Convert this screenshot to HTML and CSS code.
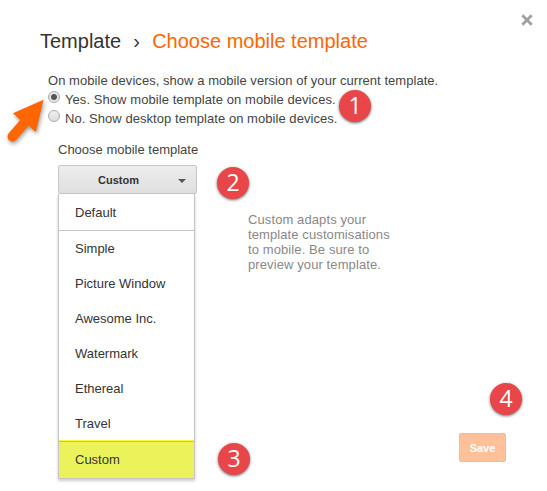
FILE: index.html
```html
<!DOCTYPE html>
<html lang="en">
<head>
<meta charset="utf-8">
<title>Choose mobile template</title>
<link rel="stylesheet" href="styles.css">
</head>
<body>
<main class="dialog">
  <button class="close" aria-label="Close"><svg width="12" height="12" viewBox="0 0 12 12"><path d="M1.300 1.300 10.700 10.700M10.700 1.300 1.300 10.700"/></svg></button>
  <h1 class="title"><span>Template</span><span class="sep">›</span><span class="current">Choose mobile template</span></h1>
  <section class="options">
    <p class="lead">On mobile devices, show a mobile version of your current template.</p>
    <div class="option"><span class="radio checked"></span><span class="yes">Yes. Show mobile template on mobile devices.</span></div>
    <div class="option"><span class="radio"></span><span class="no">No. Show desktop template on mobile devices.</span></div>
  </section>
  <section class="chooser">
    <div class="picker">
      <p class="label">Choose mobile template</p>
      <button class="select"><span>Custom</span><i class="caret"></i></button>
      <ul class="menu">
        <li class="first">Default</li>
        <li>Simple</li>
        <li>Picture Window</li>
        <li>Awesome Inc.</li>
        <li>Watermark</li>
        <li>Ethereal</li>
        <li>Travel</li>
        <li class="selected">Custom</li>
      </ul>
    </div>
    <div class="side">
      <p class="hint">Custom adapts your<br>template customisations<br>to mobile. Be sure to<br>preview your template.</p>
      <button class="save">Save</button>
    </div>
  </section>
  <svg class="arrow" width="50" height="60" viewBox="0 0 50 60"><path d="M43.500 9.700 13 23.200 20.200 30 8.700 43.300C4.700 49.500 12.300 54.500 16.300 49.700L28.500 35.800 35.900 42Z"/></svg>
  <span class="badge one">1</span>
  <span class="badge two">2</span>
  <span class="badge three">3</span>
  <span class="badge four">4</span>
</main>
</body>
</html>
```
FILE: styles.css
```css
* { box-sizing: border-box; }
body { margin: 0; background: #fff; color: #333; font: 13px/19px "Liberation Sans", Arial, sans-serif; }
p, h1, ul { margin: 0; padding: 0; }
button { font: inherit; border: 0; padding: 0; background: none; }
.dialog { position: relative; width: 547px; height: 491px; overflow: hidden; padding: 29px 0 0 40px; }
.close { position: absolute; left: 521px; top: 14px; width: 12px; height: 12px; line-height: 0; }
.close path { stroke: #a0a0a0; stroke-width: 2.8; fill: none; }
.title { display: flex; height: 24px; font-size: 20px; line-height: 24px; font-weight: 400; }
.sep { width: 31px; text-align: center; }
.current { color: #ff6600; }
.options { margin: 18px 0 0 8px; color: #444; }
.lead { letter-spacing: .045px; }
.option { display: flex; height: 19px; gap: 5px; white-space: nowrap; }
.yes { letter-spacing: .07px; }
.no { letter-spacing: .05px; }
.radio { width: 12px; height: 12px; margin-top: 1px; border: 1px solid #aaa; border-radius: 50%; background: linear-gradient(#eee, #ddd); }
.checked { background: radial-gradient(circle, #555 0 2.5px, #e5e5e5 3.5px); }
.chooser { display: flex; margin: 12px 0 0 18px; }
.picker { width: 139px; }
.label { height: 25px; color: #444; white-space: nowrap; }
.select { display: flex; align-items: center; width: 139px; height: 29px; padding: 2px 10px 0 39px; justify-content: space-between; border: 1px solid #c6c6c6; border-radius: 2px; background: linear-gradient(#ededed, #dfdfdf); color: #333; font-size: 11px; font-weight: 700; }
.caret { border: 4px solid transparent; border-top-color: #555; border-bottom: 0; }
.menu { width: 137px; height: 285px; border: 1px solid #c5c5c5; border-top: 0; list-style: none; box-shadow: 0 2px 3px rgba(0,0,0,.2); }
.menu li { height: 35px; padding-left: 16px; line-height: 35px; color: #333; }
.menu .first { height: 37px; line-height: 37px; border-bottom: 1px solid #c5c5c5; }
.menu .selected { height: 37px; border-top: 1px solid #c8c83e; box-shadow: 0 -1px #f6f63a; background: #ecf35a; line-height: 36px; }
.side { width: 300px; padding: 72px 0 0 51px; }
.hint { height: 60px; color: #888; line-height: 15px; letter-spacing: .1px; }
.save { display: block; width: 47px; height: 29px; margin: 161px 0 0 211px; border: 1px solid #ffb78c; border-radius: 2px; background: #ffc09a; color: #fff; font-size: 11px; font-weight: 700; padding-top: 1px; }
.arrow { position: absolute; left: 0; top: 90px; fill: #ff6600; filter: drop-shadow(1px 2px 2px rgba(0,0,0,.4)); }
.badge { position: absolute; width: 32px; height: 32px; border-radius: 50%; background: #e84649; color: #fff; font: 23px/30px "Open Sans", sans-serif; text-align: center; box-shadow: 0 1px 3px rgba(0,0,0,.6); }
.one { left: 339px; top: 90px; }
.two { left: 217px; top: 167px; }
.three { left: 218px; top: 443px; }
.four { left: 490px; top: 383px; }
```
